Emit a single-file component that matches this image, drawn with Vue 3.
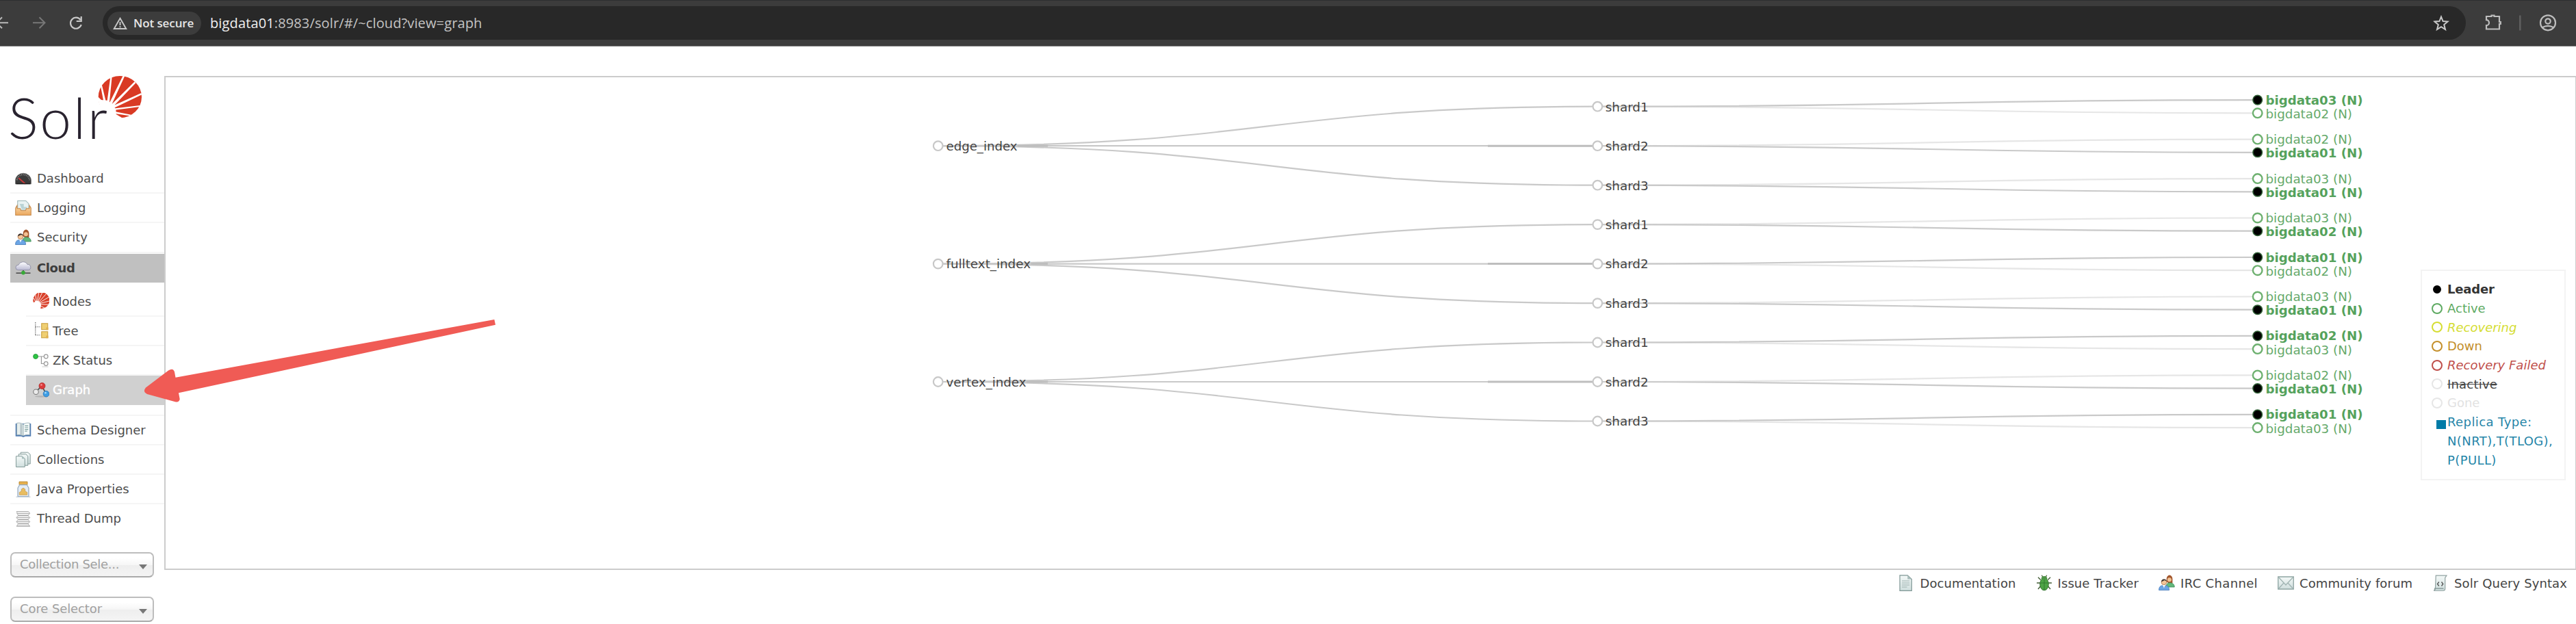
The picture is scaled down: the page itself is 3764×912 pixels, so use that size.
<script setup>
const mainMenu = [
  { label: 'Dashboard', icon: 'gauge' },
  { label: 'Logging', icon: 'inbox' },
  { label: 'Security', icon: 'users' },
]
const cloudMenu = [
  { label: 'Nodes', icon: 'sun' },
  { label: 'Tree', icon: 'tree' },
  { label: 'ZK Status', icon: 'zk' },
  { label: 'Graph', icon: 'graph', active: true },
]
const lowerMenu = [
  { label: 'Schema Designer', icon: 'book' },
  { label: 'Collections', icon: 'docs' },
  { label: 'Java Properties', icon: 'jar' },
  { label: 'Thread Dump', icon: 'stack' },
]
const footerLinks = [
  { label: 'Documentation', icon: 'doc' },
  { label: 'Issue Tracker', icon: 'bug' },
  { label: 'IRC Channel', icon: 'users' },
  { label: 'Community forum', icon: 'mail' },
  { label: 'Solr Query Syntax', icon: 'script' },
]
const legend = ['Leader', 'Active', 'Recovering', 'Down', 'Recovery Failed', 'Inactive', 'Gone']

// Each replica is [host number, is leader].
const cluster = [
  { name: 'edge_index', width: 104, shards: [[[3, 1], [2, 0]], [[2, 0], [1, 1]], [[3, 0], [1, 1]]] },
  { name: 'fulltext_index', width: 123.5, shards: [[[3, 0], [2, 1]], [[1, 1], [2, 0]], [[3, 0], [1, 1]]] },
  { name: 'vertex_index', width: 117, shards: [[[2, 1], [3, 0]], [[2, 0], [1, 1]], [[1, 1], [3, 0]]] },
]
const X = [1370.7, 2334.3, 3298.7]
const diagonal = (x1, y1, x2, y2) => {
  const m = (x1 + x2) / 2
  return `M${x1},${y1}C${m},${y1} ${m},${y2} ${x2},${y2}`
}
const collections = []
const shards = []
const replicas = []
const links = []
cluster.forEach((c, ci) => {
  const cy = 213.2 + ci * 172.4
  collections.push({ name: c.name, width: c.width, y: cy })
  c.shards.forEach((reps, si) => {
    const sy = cy + (si - 1) * 57.5
    shards.push({ name: 'shard' + (si + 1), y: sy })
    links.push({ d: diagonal(X[0], cy, X[1], sy), strong: true })
    reps.forEach(([host, leader], ri) => {
      const ry = sy + (ri ? 9.6 : -9.6)
      replicas.push({ name: `bigdata0${host} (N)`, leader: !!leader, y: ry, dy: ri ? 7.4 : 6.5 })
      links.push({ d: diagonal(X[1], sy, X[2], ry), strong: !!leader })
    })
  })
})
links.sort((a, b) => a.strong - b.strong)
</script>

<template>
  <div class="page">
    <svg class="sprites" width="0" height="0" aria-hidden="true">
      <defs>
        <linearGradient id="gBox" x1="0" y1="0" x2="0" y2="1"><stop offset="0" stop-color="#fbdcae" /><stop offset="1" stop-color="#eaa65c" /></linearGradient>
        <linearGradient id="gCloud" x1="0" y1="0" x2="0" y2="1"><stop offset="0" stop-color="#ffffff" /><stop offset="1" stop-color="#b9b9d2" /></linearGradient>
        <linearGradient id="gPaper" x1="0" y1="0" x2="0" y2="1"><stop offset="0" stop-color="#f4f9f8" /><stop offset="1" stop-color="#cfdedd" /></linearGradient>
        <symbol id="gauge" viewBox="0 0 16 16">
          <path d="M.3 13.2V10a7.700 7.200 0 0 1 15.400 0v3.200z" fill="#3b3b3b" stroke="#777" stroke-width=".5" />
          <path d="M2 9.500a6 5.300 0 0 1 12 0" fill="none" stroke="#999" stroke-width="1.200" stroke-dasharray=".7 1" />
          <path d="M3.500 7.500l6.500 5.700" stroke="#c8383a" stroke-width="1.300" />
          <path d="M1 13h14" stroke="#222" />
        </symbol>
        <symbol id="inbox" viewBox="0 0 16 16">
          <path d="M2.500 1h8l2.800 2.800V10h-10.800z" fill="#e9f2f2" stroke="#9ab5b6" stroke-width=".7" />
          <path d="M4.500 4h4v3h3v2h-5z" fill="#b9d3d5" />
          <path d="M.5 8l1.500-2.500v3h3l.8 2h4.400l.8-2h3v-3L15.500 8v7h-15z" fill="url(#gBox)" stroke="#c78a4c" stroke-width=".7" />
        </symbol>
        <symbol id="users" viewBox="0 0 16 16">
          <path d="M7.800 7V4a2.800 3.500 0 0 1 5.800 0v4l-2 1z" fill="#a3562c" />
          <circle cx="10.600" cy="4.800" r="2" fill="#f2c294" />
          <path d="M7.500 12c0-3 1-4 3.200-4.200 3 0 4.800 1.500 4.800 4.200z" fill="#62b77b" stroke="#368750" stroke-width=".5" />
          <circle cx="5.300" cy="7.200" r="2.600" fill="#f4c698" stroke="#a56e43" stroke-width=".5" />
          <path d="M2.700 7a2.700 3 0 0 1 5.300-.5l-2-1.100z" fill="#3a3433" />
          <path d="M.4 15c0-3.200 1.500-4.300 3.200-4.500l1.700 1 1.700-1c2 .2 3.400 1.500 3.400 4.500z" fill="#6ba5e5" stroke="#3d73b4" stroke-width=".5" />
          <path d="M4.300 10.500l1 2.500 1-2.500z" fill="#fff" />
        </symbol>
        <symbol id="cloud" viewBox="0 0 16 16">
          <path d="M3 9.800a2.500 2.500 0 0 1 .3-5A4.700 4.300 0 0 1 12 4.300a2.900 2.800 0 0 1 1 5.500z" fill="url(#gCloud)" stroke="#8c8ca4" stroke-width=".6" />
          <path d="M8 10v3M1 12.800h14" stroke="#555" stroke-width="1.200" />
          <circle cx="8" cy="12.400" r="1.900" fill="#38aa38" />
        </symbol>
        <symbol id="sun" viewBox="0 0 16 16">
          <path d="M.3 8.500A8 8 0 1 1 7.500 15.300L8 12 7.500 9.800 5.500 8 3 7.600 1 9.500z" fill="#d9412b" />
          <path d="M4 11L.7 5M4 11L2.500 1.500M4 11L5.700 0M4 11L9 0M4 11L13 1M4 11L15.800 4M4 11L16 8M4 11L15.500 11.500M4 11L12 15" stroke="#fff" stroke-width=".6" />
        </symbol>
        <symbol id="tree" viewBox="0 0 16 16">
          <path d="M2.500 0v13M2.500 4.500h5M2.500 12.500h5" fill="none" stroke="#555" stroke-dasharray=".8 .8" stroke-width=".8" />
          <path d="M8.500 1.200h6v6h-6z M8.500 9.200h6v6h-6z" fill="#efcf72" stroke="#c79d3f" stroke-width=".7" />
          <path d="M13 5h2v2.500h-2z M13 13h2v2.500h-2z" fill="#e0b04c" />
        </symbol>
        <symbol id="zk" viewBox="0 0 16 16">
          <path d="M4 4h7M8.300 4v7h3" fill="none" stroke="#999" stroke-width=".8" />
          <circle cx="2.700" cy="4" r="2.300" fill="#2fc545" stroke="#168a29" stroke-width=".5" />
          <circle cx="12.800" cy="4" r="1.900" fill="#fff" stroke="#999" stroke-width=".8" />
          <circle cx="12.800" cy="11" r="1.900" fill="#fff" stroke="#999" stroke-width=".8" />
          <path d="M9 14h6" stroke="#ddd" />
        </symbol>
        <symbol id="graph" viewBox="0 0 16 16">
          <path d="M3 10l5.500-6 4.500 7.500" fill="none" stroke="#555" stroke-width="1.200" />
          <ellipse cx="8" cy="14.300" rx="6" ry=".8" fill="#b5b5b5" />
          <circle cx="3" cy="9.800" r="2.500" fill="#ececec" stroke="#777" stroke-width=".7" />
          <circle cx="9" cy="4" r="3" fill="#dc3b3b" stroke="#a52525" stroke-width=".5" />
          <circle cx="13" cy="11.800" r="2.900" fill="#3d9de4" stroke="#2570b3" stroke-width=".5" />
          <circle cx="8.300" cy="3" r=".9" fill="#f49a9a" /><circle cx="12.300" cy="10.800" r=".9" fill="#a5d6f6" />
        </symbol>
        <symbol id="book" viewBox="0 0 16 16">
          <path d="M.5 2h15v12.500h-5.500L8 15.400 6 14.500H.5z" fill="#4f7bb2" />
          <path d="M1.700 1.600C4 1 6.500 1.500 8 3v11c-2-1-4-1.200-6.300-.8z" fill="#e8efee" stroke="#8fa5ad" stroke-width=".5" />
          <path d="M14.300 1.600C12 1 9.500 1.500 8 3v11c2-1 4-1.200 6.300-.8z" fill="#f6faf9" stroke="#8fa5ad" stroke-width=".5" />
          <path d="M6.800 2.600v11L5 13V2z" fill="#b5c4c7" />
          <path d="M9.500 4.300h3.300M9.500 6h3.300M9.500 7.700h3.300M9.500 9.400h2.300" stroke="#7da0a0" stroke-width=".8" />
        </symbol>
        <symbol id="docs" viewBox="0 0 16 16">
          <g fill="url(#gPaper)" stroke="#78918f" stroke-width=".6">
            <path d="M5.500.8h7l2.300 2V12H5.500z" /><path d="M3.500 2.500h7l2 2v9h-9z" /><path d="M1 4.500h5.700L9.500 7v8H1z" />
          </g>
          <path d="M6.500 4.500l.3 2.500h2.700" fill="#a7bfbd" />
        </symbol>
        <symbol id="jar" viewBox="0 0 16 16">
          <path d="M4 .7h8v3H4z" fill="#e5b04d" stroke="#b98730" stroke-width=".6" />
          <path d="M4.500 3.700h7l1.800 3V15H2.700V6.700z" fill="#e4edf6" stroke="#92a7bd" stroke-width=".8" />
          <path d="M4.200 13.500V11l2-1V8L8 6.800 9.800 8v2l2 1v2.500z" fill="#e8bd62" stroke="#cb9945" stroke-width=".5" />
          <path d="M1 15.500h14" stroke="#c0cad4" stroke-width=".8" />
        </symbol>
        <symbol id="stack" viewBox="0 0 16 16">
          <path d="M1.500 1h11.500l1.500 1.800L12.500 5l2 2-2 2 2 2-2 2 2 2.500h-13l1.500-2.500-1.700-2 1.700-2-1.700-2 1.700-2z" fill="#ececec" stroke="#aaa" stroke-width=".6" />
          <path d="M3 5h10M3 9h10M3 13h10" stroke="#999" stroke-width=".8" />
          <path d="M1.500 3h12.500M1.500 7h12.500M1.500 11h12.500M1.500 15.200h13" stroke="#b5b5b5" stroke-width=".7" />
        </symbol>
        <symbol id="doc" viewBox="0 0 16 16">
          <path d="M2 .6h7.500l4 3.800v11.200H2z" fill="url(#gPaper)" stroke="#7e9694" stroke-width=".8" />
          <path d="M9.500.6v3.800h4z" fill="#a8bcba" />
          <path d="M4 6h7.500M4 8h7.500M4 10h7.500M4 12h5" stroke="#9db2b0" stroke-width=".7" />
        </symbol>
        <symbol id="bug" viewBox="0 0 16 16">
          <path d="M4.500 5L2 2.500M11.500 5L14 2.500M4 8H.7M12 8h3.300M4.500 11L2 14M11.500 11L14 14M6.500 2L5.500.5M9.500 2l1-1.500" stroke="#425b34" stroke-width=".9" />
          <ellipse cx="8" cy="9.200" rx="4.200" ry="6" fill="#4da346" stroke="#2c6d29" stroke-width=".6" />
          <path d="M5 4.200a3 2.800 0 0 1 6 0z" fill="#4d9345" /><path d="M8 4.500v10.500M4 8h8" stroke="#2f7930" stroke-width=".6" />
        </symbol>
        <symbol id="mail" viewBox="0 0 16 16">
          <path d="M.5 2h15v12H.5z" fill="url(#gPaper)" stroke="#8fa5a3" stroke-width=".9" />
          <path d="M1 2.500l7 7.500 7-7.500M1 13.500l5-5.500M15 13.500L10 8" fill="none" stroke="#9fb3b1" stroke-width=".8" />
        </symbol>
        <symbol id="script" viewBox="0 0 16 16">
          <path d="M3.500.7H14L12.500 3v10.500c0 1.500-.7 2-2 2H1.500c1.300-.4 1.500-1.200 1.500-2.500z" fill="url(#gPaper)" stroke="#91a3a2" stroke-width=".8" />
          <path d="M1.500 15.300c1-.2 1-2 1-2H11" fill="none" stroke="#8b9d9c" stroke-width=".9" />
          <path d="M6.500 7L5 9l1.500 2M9 7l1.500 2L9 11" fill="none" stroke="#555" stroke-width=".9" />
        </symbol>
      </defs>
    </svg>

    <header class="toolbar">
      <svg class="nav" viewBox="0 0 140 67" fill="none" stroke-width="2">
        <path d="M12 33.300H-4M3 25.300l-8 8 8 8" stroke="#b9b9b9" />
        <path d="M48 33.300h17M57.500 25.300l8 8-8 8" stroke="#777" />
        <path d="M117.500 29a8 8 0 1 0 1.200 7M118.700 24v7h-7" stroke="#c9c9c9" stroke-width="2.200" />
      </svg>
      <div class="address">
        <div class="chip">
          <svg class="warn" viewBox="0 0 21 18" fill="none" stroke="#c9c9c9" stroke-width="1.900"><path d="M10.500 1.800L19.300 17H1.700z" /><path d="M10.500 7v5M10.500 13.200v2" /></svg>
          <span>Not secure</span>
        </div>
        <div class="url"><b>bigdata01</b>:8983/solr/#/~cloud?view=graph</div>
        <svg class="star" viewBox="0 0 24 24" fill="none" stroke="#c9c9c9" stroke-width="2"><path d="M12 2.500l2.600 6.500 7 .5-5.400 4.500 1.800 7-6-3.900L6 21l1.800-7-5.400-4.500 7-.5z" /></svg>
      </div>
      <svg class="tools" viewBox="3603 0 161 67" fill="none" stroke="#bdbdbd" stroke-width="2.200">
        <path d="M3633 24h7.500v-1.500h4V24h7.500v8h1.800v3H3652v7.500h-19v-5.300a4 4 0 0 0 0-8z" />
        <path d="M3682.300 22.500v22" stroke="#606060" stroke-width="2.500" />
        <circle cx="3723" cy="33.300" r="11" /><circle cx="3723" cy="31" r="3.700" /><path d="M3714.500 40.500c5-3.400 12-3.400 17 0" />
      </svg>
    </header>

    <div class="body">
      <aside class="side">
        <svg class="logo" viewBox="0 0 240 172">
          <g transform="translate(0,22) scale(.33333)">
            <ellipse cx="526" cy="155" rx="95" ry="92" fill="#d93a24" />
            <path fill="#fff" d="M462 215L440 103l6-3 28 115zM464 215L484 68l7-2-15 149zM464 213L540 60l7 3-71 155zM466 211L590 88l5 6-120 125zM466 207L619 138l3 7-150 72zM468 209L614 192v6l-145 19zM468 212L575 233l-7 5-103-16z" />
            <path fill="#fff" d="M425 150l19 18 30 3 20 18 14 20 1 22 30 18-80 20z" />
          </g>
          <text x="12" y="135" class="wordmark" textLength="145">Solr</text>
        </svg>
        <ul class="menu">
          <li v-for="m in mainMenu" :key="m.label"><svg class="ico"><use :href="'#' + m.icon" /></svg><span>{{ m.label }}</span></li>
          <li class="current"><svg class="ico"><use href="#cloud" /></svg><span>Cloud</span></li>
        </ul>
        <ul class="menu sub">
          <li v-for="m in cloudMenu" :key="m.label" :class="{ active: m.active }"><svg class="ico"><use :href="'#' + m.icon" /></svg><span>{{ m.label }}</span></li>
        </ul>
        <ul class="menu lower">
          <li v-for="m in lowerMenu" :key="m.label"><svg class="ico"><use :href="'#' + m.icon" /></svg><span>{{ m.label }}</span></li>
        </ul>
        <div class="select long"><span>Collection Sele...</span><i></i></div>
        <div class="select"><span>Core Selector</span><i></i></div>
      </aside>

      <div class="content">
        <main class="frame">
          <svg class="canvas" viewBox="242 113 3521 718">
            <path v-for="(l, i) in links" :key="i" :d="l.d" :class="['link', { strong: l.strong }]" />
            <g v-for="c in collections" :key="c.name">
              <path class="shade" :d="`M${1383 + c.width},${c.y}H1531M2174,${c.y}H2334`" />
              <circle class="node" :cx="X[0]" :cy="c.y" r="6.800" />
              <text class="label" x="1382.500" :y="c.y + 6.800" :textLength="c.width" lengthAdjust="spacingAndGlyphs">{{ c.name }}</text>
            </g>
            <g v-for="(s, i) in shards" :key="i">
              <circle class="node" :cx="X[1]" :cy="s.y" r="6.800" />
              <text class="label" x="2345.700" :y="s.y + 6.800" textLength="63" lengthAdjust="spacingAndGlyphs">{{ s.name }}</text>
            </g>
            <g v-for="(r, i) in replicas" :key="i" :class="['replica', { leader: r.leader }]">
              <circle :cx="X[2]" :cy="r.y" r="6.800" />
              <text x="3310.500" :y="r.y + r.dy" :textLength="r.leader ? 142 : 126.500" lengthAdjust="spacingAndGlyphs">{{ r.name }}</text>
            </g>
          </svg>
          <div class="legend">
            <ul>
              <li v-for="name in legend" :key="name" :class="name.toLowerCase().replace(' ', '-')"><i></i><span>{{ name }}</span></li>
              <li class="type"><i></i><span>Replica Type:<br />N(NRT),T(TLOG),<br />P(PULL)</span></li>
            </ul>
          </div>
        </main>
        <footer class="footer">
          <a v-for="f in footerLinks" :key="f.label" :class="f.icon"><svg class="ico"><use :href="'#' + f.icon" /></svg><span>{{ f.label }}</span></a>
        </footer>
      </div>
    </div>

    <svg class="pointer" viewBox="205 460 525 135">
      <path d="M213 566.500L246 541.500Q253 537 255 543.500L256.500 551.700 722.300 467l1.700 7.700L261 574.300l1.700 9Q262 588.500 256 587.200L215 576Q208 572.500 213 566.500z" fill="#f05b55" />
    </svg>
  </div>
</template>

<style>
body { margin: 0; background: #fff; }
</style>

<style scoped>
.page { position: relative; width: 3764px; height: 912px; overflow: hidden; background: #fff; font-family: "DejaVu Sans", Verdana, sans-serif; font-size: 18px; color: #4d4d4d; }
.sprites { position: absolute; }
.toolbar { box-sizing: border-box; height: 68px; display: flex; align-items: flex-start; background: #3c3c3c; border-top: 1px solid #2d2f30; border-bottom: 1px solid #858585; font-family: "Open Sans", "Noto Sans", sans-serif; }
.nav { width: 140px; height: 67px; margin-right: 10px; flex: none; margin-top: -1px; }
.address { box-sizing: border-box; margin-top: 8px; width: 3453px; height: 49px; border-radius: 25px; background: #282828; display: flex; align-items: center; padding: 0 24px 0 7px; }
.chip { box-sizing: border-box; width: 137px; height: 34px; border-radius: 17px; background: #3c3c3c; display: flex; align-items: center; padding-left: 8px; color: #e6e6e6; font-size: 17px; font-weight: 600; }
.chip span { margin-left: 9px; white-space: nowrap; letter-spacing: -.1px; }
.warn { width: 21px; height: 18px; flex: none; }
.url { margin-left: 13px; font-size: 20px; color: #c4c4c4; white-space: nowrap; flex: 1; letter-spacing: .13px; }
.url b { font-weight: 400; color: #f0f0f0; }
.star { width: 24px; height: 24px; }
.tools { width: 161px; height: 67px; flex: none; margin-top: -1px; }

.body { display: flex; height: 844px; }
.side { width: 240px; flex: none; }
.logo { display: block; width: 240px; height: 172px; }
.wordmark { font-family: Lato, sans-serif; font-weight: 300; font-size: 82px; fill: #29232f; }
.menu { list-style: none; margin: 0 0 0 15px; padding: 0; }
.menu li { box-sizing: border-box; height: 43.200px; display: flex; align-items: center; padding-left: 7px; border-bottom: 2px solid #f5f5f5; white-space: nowrap; }
.ico { width: 24px; height: 24px; flex: none; }
.menu span { margin-left: 8px; }
.menu li.current { background: #c0c0c0; font-weight: 700; color: #3d3d3d; border: 0; height: 42px; margin-top: 1px; letter-spacing: -.4px; }
.sub { margin-left: 37.500px; padding-top: 7px; }
.sub li { padding-left: 10.500px; }
.sub li span { margin-left: 5px; }
.sub li.active { background: #d0d0d0; color: #fff; -webkit-text-stroke: .4px #fff; border: 0; padding-bottom: 2px; }
.lower { margin-top: 13.500px; border-top: 2px solid #f5f5f5; }
.lower li:last-child { border: 0; padding-bottom: 2px; }
.select { box-sizing: border-box; width: 210px; height: 37px; margin: 0 0 28px 15px; padding: 0 8px 0 12px; border: 2px solid #bdbdbd; border-bottom-color: #aaa; border-radius: 7px; background: linear-gradient(#fff 20%, #f6f6f6 50%, #eee 52%, #f4f4f4); color: #a0a0a0; display: flex; align-items: center; justify-content: space-between; letter-spacing: -.1px; }
.select.long { letter-spacing: -.3px; }
.lower + .select { margin-top: 26px; }
.select i { border: 6px solid transparent; border-top: 7px solid #777; border-bottom: 0; margin-top: 7px; }
.select span { padding-bottom: 1px; }

.content { flex: 1; display: flex; flex-direction: column; padding-top: 43px; }
.frame { box-sizing: border-box; position: relative; width: 3524px; height: 722px; border: 2px solid #ccc; border-right-width: 1px; }
.canvas { display: block; width: 3521px; height: 718px; }
.link { fill: none; stroke: #e6e6e6; stroke-width: 2.200; }
.link.strong { stroke: #c9c9c9; }
.shade { stroke: #bebebe; stroke-width: 3; fill: none; }
.node { fill: #fff; stroke: #c8c8c8; stroke-width: 2.200; }
.label { font-size: 18px; fill: #444; }
.replica text { font-size: 18px; fill: #66aa6b; }
.replica circle { fill: #fff; stroke: #6db06f; stroke-width: 2.400; }
.replica.leader text { font-weight: 700; fill: #55a25c; }
.replica.leader circle { fill: #000; stroke: #35643a; stroke-width: 1.500; }

.legend { position: absolute; left: 3295px; top: 281px; box-sizing: border-box; width: 212px; height: 308px; border: 2px solid #f3f3f3; background: #fff; }
.legend ul { list-style: none; margin: 0; padding: 13px 0 0 14px; }
.legend li { height: 27.700px; display: flex; align-items: center; white-space: nowrap; color: #444; }
.legend i { box-sizing: border-box; width: 16px; height: 16px; border: 2.200px solid currentColor; border-radius: 50%; flex: none; }
.legend span { margin-left: 7px; }
.legend .leader { font-weight: 700; color: #333; letter-spacing: -.2px; }
.legend .leader i { width: 12px; height: 12px; margin: 0 2px; background: #000; border-color: #000; }
.legend .active { color: #5eaa62; }
.legend .recovering { color: #d5dd32; font-style: italic; }
.legend .down { color: #c48f2b; }
.legend .recovery-failed { color: #bf4f4b; font-style: italic; }
.legend .inactive span { text-decoration: line-through; letter-spacing: .2px; }
.legend .inactive i, .legend .gone i { border-color: #e6e6e6; }
.legend .gone { color: #e2e2e2; }
.legend .type { height: auto; align-items: flex-start; color: #2585a8; line-height: 28px; letter-spacing: .4px; }
.legend .type i { width: 14px; height: 13px; border: 0; border-radius: 0; background: #007ba7; margin: 11px 0 0 7px; }
.legend .type span { margin-left: 2px; }

.footer { display: flex; justify-content: flex-end; padding: 6px 13px 0 0; height: 26px; }
.footer a { display: flex; align-items: center; margin-left: 29px; color: #444; white-space: nowrap; letter-spacing: .1px; }
.footer a.users { letter-spacing: .35px; }
.footer span { margin-left: 8px; }
.pointer { position: absolute; left: 205px; top: 460px; width: 525px; height: 135px; }
</style>
